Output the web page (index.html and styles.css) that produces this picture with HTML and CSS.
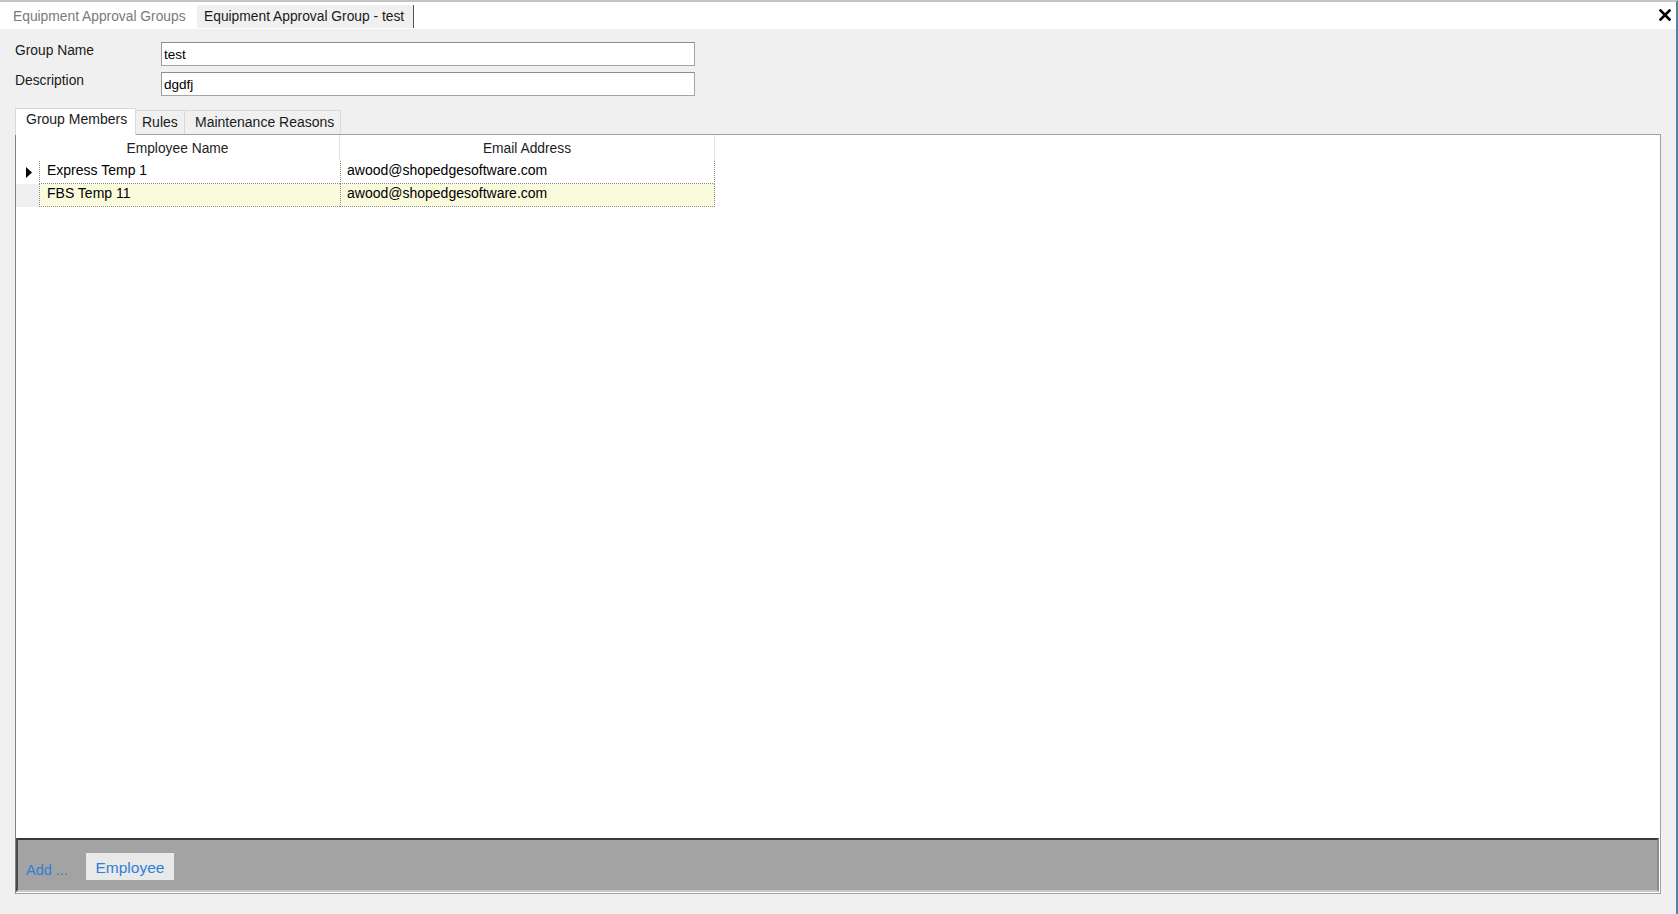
FILE: index.html
```html
<!DOCTYPE html>
<html>
<head>
<meta charset="utf-8">
<link rel="stylesheet" href="styles.css">
</head>
<body>
<div class="window">
  <div class="doc-tabs">
    <div class="doc-tab">Equipment Approval Groups</div>
    <div class="doc-tab active">Equipment Approval Group - test</div>
    <div class="close">
      <svg width="12" height="12" viewBox="0 0 12 12"><path d="M1.5 1.5 L10.5 10.5 M10.5 1.5 L1.5 10.5" stroke="#000" stroke-width="2.6" stroke-linecap="square"/></svg>
    </div>
  </div>
  <div class="content">
    <div class="form">
      <div class="form-row">
        <label class="form-label">Group Name</label>
        <div class="input">test</div>
      </div>
      <div class="form-row">
        <label class="form-label">Description</label>
        <div class="input">dgdfj</div>
      </div>
    </div>
    <div class="tabs">
      <div class="tab active">Group Members</div>
      <div class="tab">Rules</div>
      <div class="tab">Maintenance Reasons</div>
    </div>
    <div class="panel">
      <div class="grid">
        <div class="grid-row header">
          <div class="cell c1 first">Employee Name</div>
          <div class="cell c2">Email Address</div>
        </div>
        <div class="grid-row data current">
          <div class="rh">
            <svg width="6" height="11" viewBox="0 0 6 11"><path d="M0 0 L6 5.5 L0 11 Z" fill="#000"/></svg>
          </div>
          <div class="cell c1">Express Temp 1</div>
          <div class="cell c2">awood@shopedgesoftware.com</div>
        </div>
        <div class="grid-row data alt">
          <div class="rh"></div>
          <div class="cell c1">FBS Temp 11</div>
          <div class="cell c2">awood@shopedgesoftware.com</div>
        </div>
      </div>
      <div class="spacer"></div>
      <div class="actionbar">
        <span class="add-link">Add ...</span>
        <span class="action-btn">Employee</span>
      </div>
    </div>
  </div>
</div>
</body>
</html>
```

FILE: styles.css
```css
* { box-sizing: border-box; }
html, body { margin: 0; padding: 0; }
body {
  width: 1678px;
  height: 914px;
  overflow: hidden;
  background: #f0f0f0;
  font-family: "Liberation Sans", Arial, sans-serif;
  font-size: 14px;
  color: #000;
}
.window {
  width: 1678px;
  height: 914px;
  display: flex;
  flex-direction: column;
  border-top: 2px solid #c4c4c4;
  border-right: 2px solid #5f7fa8;
  background: #f0f0f0;
}
.doc-tabs {
  height: 27px;
  background: #fff;
  display: flex;
  align-items: stretch;
}
.doc-tab {
  padding: 2px 8px 0 13px;
  display: flex;
  align-items: center;
  color: #7a7a7a;
  font-size: 13.8px;
  width: 197px;
  white-space: nowrap;
}
.doc-tab.active {
  width: 217px;
  padding-left: 7px;
  padding-top: 0;
  background: #f0f0f0;
  color: #1a1a1a;
  border-right: 1px solid #555;
  margin-top: 3px;
  margin-bottom: 1px;
}
.close {
  margin-left: auto;
  margin-right: 5px;
  display: flex;
  align-items: center;
  padding-bottom: 2px;
}
.content {
  flex: 1;
  display: flex;
  flex-direction: column;
  padding: 13px 15px 20px 15px;
}
.form {
  display: flex;
  flex-direction: column;
  gap: 6px;
}
.form-row {
  display: flex;
  align-items: flex-start;
  height: 24px;
}
.form-label {
  width: 146px;
  font-size: 13.8px;
  color: #1a1a1a;
  line-height: 16px;
  margin-top: 1px;
}
.input {
  width: 534px;
  height: 24px;
  background: #fff;
  border: 1px solid #a5a5a5;
  border-top-color: #8d8d8d;
  border-left-color: #999;
  padding: 4px 2px 0 2px;
  font-size: 13.5px;
  line-height: 16px;
}
.tabs {
  display: flex;
  align-items: flex-end;
  margin-top: 11px;
  height: 27px;
}
.tab {
  height: 24px;
  padding: 0 8px 2px 8px;
  display: flex;
  align-items: center;
  background: #f0f0f0;
  border: 1px solid #d9d9d9;
  border-bottom: none;
  border-left: none;
  font-size: 14px;
  color: #1a1a1a;
  white-space: nowrap;
}
.tab.active {
  height: 27px;
  width: 121px;
  background: #fff;
  border-left: 1px solid #d9d9d9;
  padding-left: 10px;
  padding-bottom: 6px;
  margin-bottom: -1px;
  position: relative;
  z-index: 1;
}
.tab:nth-child(2) { width: 49px; padding-left: 6px; }
.tab:nth-child(3) { width: 156px; padding-left: 10px; }
.panel {
  flex: 1;
  width: 1646px;
  background: #fff;
  border: 1px solid #a0a0a0;
  border-left-color: #828282;
  display: flex;
  flex-direction: column;
}
.grid {
  width: 699px;
}
.grid-row {
  display: flex;
}
.grid-row.header {
  height: 26px;
}
.grid-row.header .cell {
  justify-content: center;
  border-right: 1px solid #e3e3e3;
  color: #222;
  padding-left: 0;
  padding-bottom: 0;
  font-size: 13.8px;
}
.grid-row.header .c1.first {
  width: 324px;
}
.rh {
  width: 23px;
  display: flex;
  align-items: center;
  justify-content: center;
  padding-left: 3px;
  padding-bottom: 1px;
}
.cell {
  display: flex;
  align-items: center;
  padding-left: 7px;
  font-size: 14px;
  white-space: nowrap;
  padding-bottom: 4px;
}
.c2 { padding-left: 6px; }
.c1 { width: 301px; }
.c2 { width: 375px; }
.grid-row.data {
  height: 23px;
}
.grid-row.data .cell {
  border-left: 1px dotted #8a8a8a;
  border-bottom: 1px dotted #8a8a8a;
}
.grid-row.data .c2 {
  border-right: 1px dotted #8a8a8a;
}
.grid-row.alt .cell {
  background: #fafadc;
}
.grid-row.alt .rh {
  background: #f0f0f0;
}
.spacer { flex: 1; }
.actionbar {
  height: 54px;
  margin: 0 1px 1px 0;
  background: #a3a3a3;
  border-top: 2px solid #3a3a3a;
  border-left: 2px solid #4a4a4a;
  border-right: 2px solid #8c8c8c;
  border-bottom: 2px solid #c8c8c8;
  display: flex;
  align-items: center;
  padding-left: 8px;
  padding-top: 3px;
}
.add-link {
  color: #2f7fd6;
  font-size: 14.5px;
  margin-right: 18px;
  margin-top: 6px;
}
.action-btn {
  background: #e9e9e9;
  color: #2f7fd6;
  font-size: 15.5px;
  height: 27px;
  width: 88px;
  display: flex;
  align-items: center;
  justify-content: center;
  padding-top: 2px;
}
```
